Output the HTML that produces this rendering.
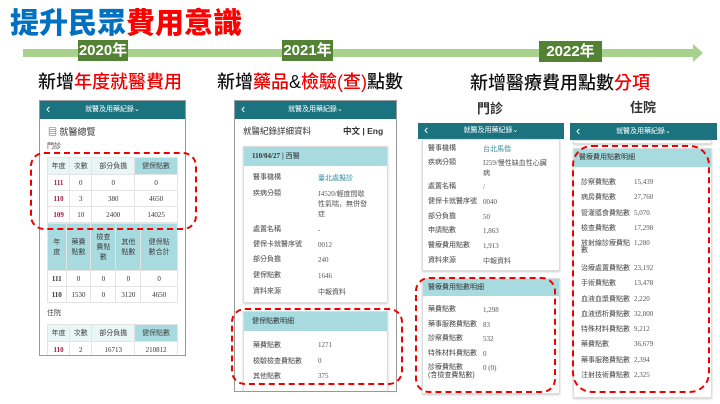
<!DOCTYPE html><html><head><meta charset="utf-8"><style>
*{margin:0;padding:0;box-sizing:border-box}
body{width:720px;height:404px;background:#fff;position:relative;overflow:hidden;font-family:"Liberation Sans","Noto Sans CJK TC",sans-serif;color:#333}
.a{position:absolute}
.t{font-size:29px;font-weight:900;left:10px;top:0px;letter-spacing:0px;white-space:nowrap}
.yr{background:#548235;color:#fff;font-weight:bold;font-size:15px;text-align:center;line-height:21px;height:21px}
.h{font-size:18px;color:#111;white-space:nowrap;font-weight:500}
.r{color:#e00}
.ph{border:1px solid #999;background:#fff;overflow:hidden}
.hd{background:#1b7380;color:#fff;font-size:7px;text-align:center;height:18px;line-height:18px;position:relative}
.hd:before{content:"‹";position:absolute;left:6px;top:-1px;font-size:13px}
table{border-collapse:collapse;position:absolute;font-size:7px;text-align:center;background:#fff}
td{border:1px solid #e4e4e4;font-family:"Liberation Serif","Noto Serif CJK SC",serif}
th{border:1px solid #e4e4e4;background:#e8f6f6;font-weight:normal;color:#444}
th.c{background:#a8dbe0}
.m{color:#9b1b4a;font-weight:bold}
.dash{border:2.5px dashed #e00;border-radius:14px}
.f{font-size:7px;color:#444;white-space:nowrap;line-height:10px}
.v{font-family:"Liberation Serif",serif;font-size:7px;color:#555;line-height:10px;white-space:nowrap}
.cd{border:1px solid #ddd;background:#fff;box-shadow:0 1px 2px #ccc}
.ch{background:#a8dbe0;font-size:7px;color:#333;padding-left:8px}
</style></head><body>
<div class="a t"><span style="color:#0070c0">提升民眾</span><span style="color:#f00">費用意識</span></div>
<div class="a" style="left:23px;top:49px;width:672px;height:8px;background:#a9d18e"></div>
<div class="a" style="left:693px;top:44px;width:0;height:0;border-top:9px solid transparent;border-bottom:9px solid transparent;border-left:10px solid #a9d18e"></div>
<div class="a yr" style="left:78px;top:40px;width:50px">2020年</div>
<div class="a yr" style="left:282px;top:40px;width:51px">2021年</div>
<div class="a yr" style="left:539px;top:41px;width:63px">2022年</div>
<div class="a h" style="left:38px;top:68px">新增<span class="r">年度就醫費用</span></div>
<div class="a h" style="left:217px;top:68px">新增<span class="r">藥品</span>&amp;<span class="r">檢驗(查)</span>點數</div>
<div class="a h" style="left:470px;top:69px">新增醫療費用點數<span class="r">分項</span></div>
<div class="a" style="left:477px;top:98px;font-size:13px;font-weight:bold">門診</div>
<div class="a" style="left:630px;top:97px;font-size:13px;font-weight:bold">住院</div>

<!-- phone1 -->
<div class="a ph" style="left:39px;top:100px;width:147px;height:256px">
<div class="hd">就醫及用藥紀錄⌄</div>
<div class="a" style="left:8px;top:24px;font-size:9px">▤ 就醫總覽</div>
<div class="a f" style="left:7px;top:41px">門診</div>
<table style="left:7px;top:56px;width:131px">
<tr style="height:17px"><th>年度</th><th>次數</th><th>部分負擔</th><th class="c">健保點數</th></tr>
<tr style="height:16px"><td class="m">111</td><td>0</td><td>0</td><td>0</td></tr>
<tr style="height:16px"><td class="m">110</td><td>3</td><td>380</td><td>4650</td></tr>
<tr style="height:16px"><td class="m">109</td><td>10</td><td>2400</td><td>14025</td></tr></table>
<table style="left:7px;top:122px;width:131px">
<tr style="height:47px"><th class="c">年<br>度</th><th class="c">藥費<br>點數</th><th class="c">檢查<br>費點<br>數</th><th class="c">其他<br>點數</th><th class="c">健保點<br>數合計</th></tr>
<tr style="height:16px"><td><b>111</b></td><td>0</td><td>0</td><td>0</td><td>0</td></tr>
<tr style="height:16px"><td><b>110</b></td><td>1530</td><td>0</td><td>3120</td><td>4650</td></tr></table>
<div class="a f" style="left:7px;top:208px">住院</div>
<table style="left:7px;top:223px;width:131px">
<tr style="height:17px"><th>年度</th><th>次數</th><th>部分負擔</th><th class="c">健保點數</th></tr>
<tr style="height:16px"><td class="m">110</td><td>2</td><td>16713</td><td>210812</td></tr></table>
</div>
<div class="a dash" style="left:30px;top:152px;width:167px;height:78px"></div>

<!-- phone2 -->
<div class="a ph" style="left:234px;top:100px;width:163px;height:292px">
<div class="hd">就醫及用藥紀錄⌄</div>
<div class="a" style="left:8px;top:24px;font-size:8.5px">就醫紀錄詳細資料</div>
<div class="a" style="left:108px;top:24px;font-size:8.5px;font-weight:bold">中文 | Eng</div>
<div class="a cd" style="left:8px;top:45px;width:145px;height:157px">
<div class="ch" style="height:19px;line-height:19px"><b class="v" style="color:#333">110/04/27</b> | 西醫</div>
<div class="a f" style="left:9px;top:26px">醫事機構</div><div class="a v" style="left:74px;top:26px;color:#3a8fa0">臺北處擬診</div>
<div class="a f" style="left:9px;top:42px">疾病分類</div><div class="a v" style="left:74px;top:42px">J4520/輕度間歇<br>性氣喘，無併發<br>症</div>
<div class="a f" style="left:9px;top:78px">處置名稱</div><div class="a v" style="left:74px;top:78px">-</div>
<div class="a f" style="left:9px;top:93px">健保卡就醫序號</div><div class="a v" style="left:74px;top:93px">0012</div>
<div class="a f" style="left:9px;top:108px">部分負擔</div><div class="a v" style="left:74px;top:108px">240</div>
<div class="a f" style="left:9px;top:124px">健保點數</div><div class="a v" style="left:74px;top:124px">1646</div>
<div class="a f" style="left:9px;top:140px">資料來源</div><div class="a v" style="left:74px;top:140px">中報資料</div>
</div>
<div class="a cd" style="left:8px;top:210px;width:145px;height:90px">
<div class="ch" style="height:19px;line-height:19px">健保點數明細</div>
<div class="a f" style="left:9px;top:26px;line-height:15.5px">藥費點數<br>檢驗檢查費點數<br>其他點數</div>
<div class="a v" style="left:74px;top:26px;line-height:15.5px">1271<br>0<br>375</div>
</div></div>
<div class="a dash" style="left:231px;top:308px;width:172px;height:77px"></div>

<!-- phone3 -->
<div class="a" style="left:418px;top:123px;width:146px;height:281px">
<div class="hd" style="height:16px;line-height:16px">就醫及用藥紀錄⌄</div>
<div class="a cd" style="left:4px;top:16px;width:138px;height:132px">
<div class="a f" style="left:5px;top:4px">醫事機構</div><div class="a v" style="left:60px;top:4px;color:#3a8fa0">台北馬偕</div>
<div class="a f" style="left:5px;top:18px">疾病分類</div><div class="a v" style="left:60px;top:18px">I259/慢性缺血性心臟<br>病</div>
<div class="a f" style="left:5px;top:42px">處置名稱</div><div class="a v" style="left:60px;top:42px">/</div>
<div class="a f" style="left:5px;top:57px">健保卡就醫序號</div><div class="a v" style="left:60px;top:57px">0040</div>
<div class="a f" style="left:5px;top:72px">部分負擔</div><div class="a v" style="left:60px;top:72px">50</div>
<div class="a f" style="left:5px;top:86px">申請點數</div><div class="a v" style="left:60px;top:86px">1,863</div>
<div class="a f" style="left:5px;top:101px">醫療費用點數</div><div class="a v" style="left:60px;top:101px">1,913</div>
<div class="a f" style="left:5px;top:116px">資料來源</div><div class="a v" style="left:60px;top:116px">中報資料</div>
</div>
<div class="a cd" style="left:4px;top:155px;width:138px;height:116px">
<div class="ch" style="height:17px;line-height:17px;padding-left:5px">醫療費用點數明細</div>
<div class="a f" style="left:5px;top:24px;line-height:14.5px">藥費點數<br>藥事服務費點數<br>診察費點數<br>特殊材料費點數<br>診療費點數</div>
<div class="a f" style="left:5px;top:92px">(含檢查費點數)</div>
<div class="a v" style="left:60px;top:24px;line-height:14.5px">1,298<br>83<br>532<br>0<br>0 (0)</div>
</div></div>
<div class="a dash" style="left:415px;top:277px;width:141px;height:116px"></div>

<!-- phone4 -->
<div class="a" style="left:570px;top:123px;width:147px;height:281px">
<div class="hd" style="height:17px;line-height:17px">就醫及用藥紀錄⌄</div>
<div class="a cd" style="left:3px;top:17px;width:139px;height:4px"></div>
<div class="a cd" style="left:3px;top:25px;width:139px;height:250px">
<div class="ch" style="height:18px;line-height:18px;padding-left:5px">醫療費用點數明細</div>
<div class="a f" style="left:7px;top:26px;line-height:15.3px">診察費點數<br>病房費點數<br>管灌膳食費點數<br>檢查費點數<br>放射線診療費點</div>
<div class="a f" style="left:7px;top:97px">數</div>
<div class="a f" style="left:7px;top:112px;line-height:15.3px">治療處置費點數<br>手術費點數<br>血液血漿費點數<br>血液透析費點數<br>特殊材料費點數<br>藥費點數<br>藥事服務費點數<br>注射技術費點數</div>
<div class="a v" style="left:60px;top:26px;line-height:15.3px">15,439<br>27,760<br>5,070<br>17,298<br>1,280</div>
<div class="a v" style="left:60px;top:112px;line-height:15.3px">23,192<br>13,478<br>2,220<br>32,800<br>9,212<br>36,679<br>2,394<br>2,325</div>
</div></div>
<div class="a dash" style="left:572px;top:145px;width:138px;height:248px;border-radius:20px"></div>
</body></html>
